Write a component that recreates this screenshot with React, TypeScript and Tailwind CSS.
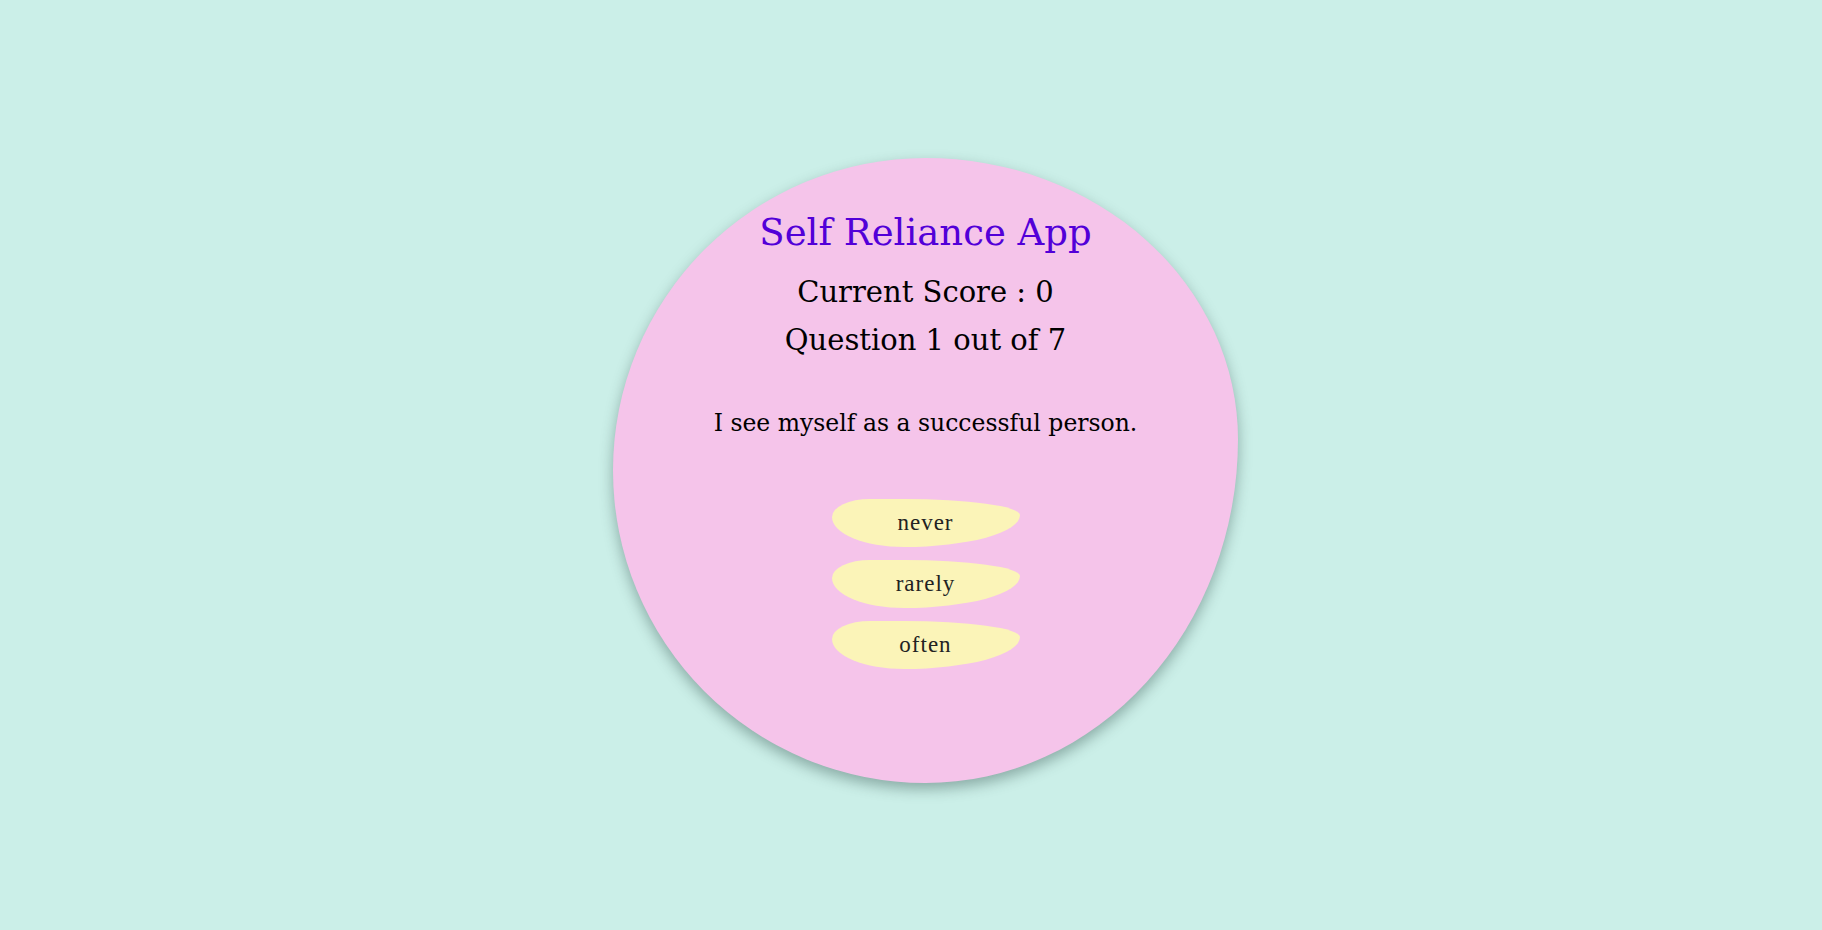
import React from "react";

const answers = ["never", "rarely", "often"];

export default function App() {
  return (
    <div className="min-h-[930px] w-full bg-[#cbefe8] flex justify-center items-start pt-[158px] pl-[29px] font-['DejaVu_Serif',serif]">
      <div className="w-[625px] h-[625px] bg-[#f5c4ea] rounded-[50%_50%_50%_50%/50%_45%_55%_50%] shadow-[0_6px_14px_rgba(40,70,65,0.4)] flex flex-col items-center pt-[53px]">
        <h1 className="text-[37px] leading-[44px] text-[#5200d8] whitespace-nowrap">Self Reliance App</h1>
        <div className="mt-[13px] text-[29px] leading-[48px] text-black whitespace-nowrap">Current Score : 0</div>
        <div className="text-[29px] leading-[48px] text-black whitespace-nowrap">Question 1 out of 7</div>
        <p className="mt-[43px] text-[23.5px] leading-[32px] text-black whitespace-nowrap">I see myself as a successful person.</p>
        <div className="mt-[60px] flex flex-col items-center gap-[13px]">
          {answers.map((a) => (
            <button
              key={a}
              className="w-[188px] h-[48px] bg-[#fbf4b8] rounded-[38px_116px_116px_72px/18px_16px_32px_30px] flex items-center justify-center font-['Liberation_Serif',serif] text-[23px] tracking-[1px] text-[#222]"
            >
              {a}
            </button>
          ))}
        </div>
      </div>
    </div>
  );
}
